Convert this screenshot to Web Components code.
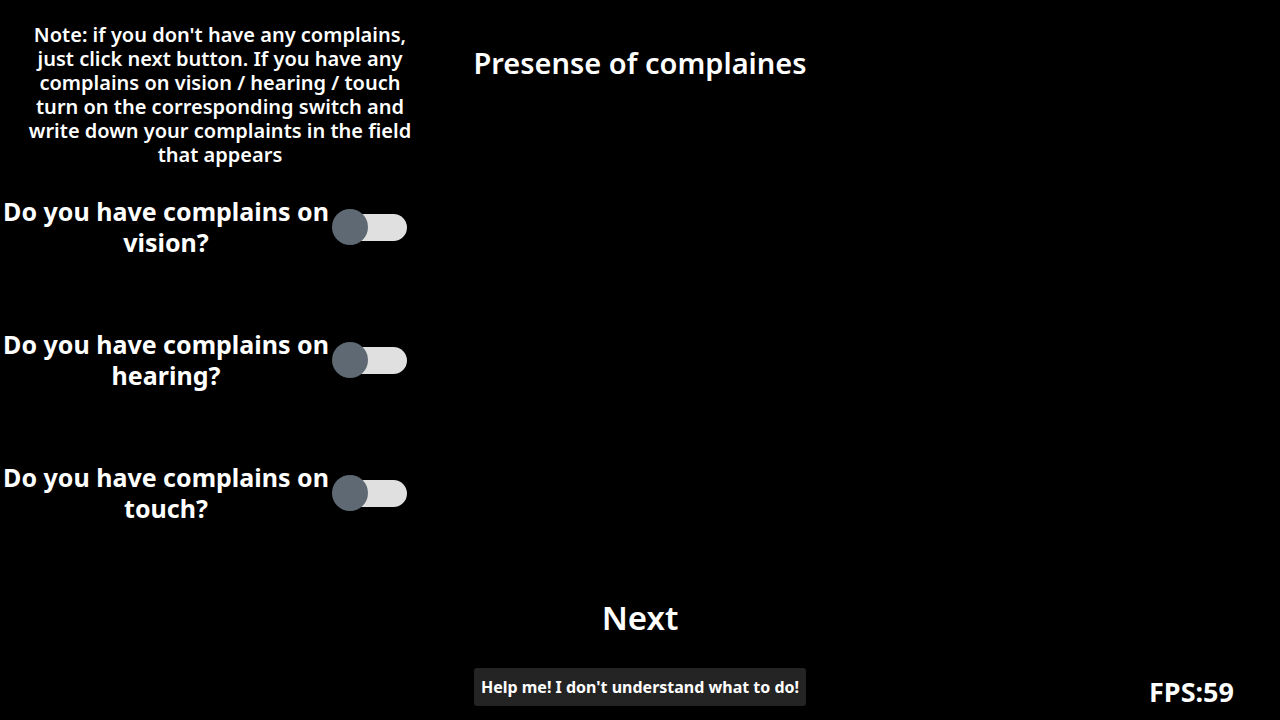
<!DOCTYPE html>
<html lang="en">
<head>
<meta charset="utf-8">
<title>Presense of complaines</title>
<style>
html, body { margin: 0; background: #000; }
</style>
</head>
<body>
<complaints-screen></complaints-screen>
<script>
class SwitchRow extends HTMLElement {
  constructor() {
    super();
    this.attachShadow({ mode: 'open' }).innerHTML = `
      <style>
        :host { display: block; }
        label { display: grid; grid-template-columns: 332px 76px; align-items: center; width: max-content; cursor: pointer; }
        .text { font-size: 25px; line-height: 31px; font-weight: 700; text-align: center; white-space: nowrap; }
        input { appearance: none; margin: 0; width: 75px; height: 36px; display: grid; align-items: center; cursor: pointer; }
        input::before, input::after { content: ""; grid-area: 1 / 1; }
        input::before { height: 27px; border-radius: 14px; background: #e0e0e0; margin-left: 8px; }
        input::after { width: 36px; height: 36px; border-radius: 50%; background: #5f6973; }
        input:checked::before { margin: 0 8px 0 0; }
        input:checked::after { justify-self: end; }
      </style>
      <label><span class="text"><slot></slot></span><input type="checkbox" role="switch"></label>`;
  }
}
customElements.define('switch-row', SwitchRow);

class ComplaintsScreen extends HTMLElement {
  constructor() {
    super();
    this.attachShadow({ mode: 'open' }).innerHTML = `
      <style>
        :host { display: grid; grid-template-rows: 180px 1fr auto;
          min-height: 100vh; box-sizing: border-box; background: #000; color: #fff;
          font-family: "Noto Sans", sans-serif; font-weight: 600; }
        p, h1 { margin: 0; }
        .note { padding: 23px 24px 0; font-size: 20px; line-height: 24px; text-align: center; }
        header { display: grid; grid-template-columns: 440px 1fr 440px; }
        h1 { padding-top: 46px; font-size: 29px; line-height: 34px; font-weight: 600; text-align: center; white-space: nowrap; }
        main { display: flex; flex-direction: column; gap: 71px; padding-top: 16px; }
        footer { display: grid; grid-template-columns: 1fr auto 1fr; align-items: end; padding-bottom: 14px; }
        .actions { grid-column: 2; display: grid; gap: 30px; justify-items: center; }
        button { border: 0; margin: 0; color: inherit; font: inherit; cursor: pointer; }
        .next { background: none; padding: 0 16px; font-size: 33px; line-height: 40px; }
        .help { background: #242424; border-radius: 3px; padding: 8px 0; width: 332px; font-size: 16px; font-weight: 700; line-height: 22px; white-space: nowrap; }
        .fps { justify-self: end; padding-right: 46px; font-size: 27px; font-weight: 700; line-height: 28px; }
      </style>
      <header>
        <p class="note">Note: if you don't have any complains,<br>just click next button. If you have any<br>complains on vision / hearing / touch<br>turn on the corresponding switch and<br>write down your complaints in the field<br>that appears</p>
        <h1>Presense of complaines</h1>
      </header>
      <main>
        <switch-row>Do you have complains on<br>vision?</switch-row>
        <switch-row>Do you have complains on<br>hearing?</switch-row>
        <switch-row>Do you have complains on<br>touch?</switch-row>
      </main>
      <footer>
        <div class="actions">
          <button class="next" type="button">Next</button>
          <button class="help" type="button">Help me! I don't understand what to do!</button>
        </div>
        <div class="fps">FPS:59</div>
      </footer>`;
  }
}
customElements.define('complaints-screen', ComplaintsScreen);
</script>
</body>
</html>
